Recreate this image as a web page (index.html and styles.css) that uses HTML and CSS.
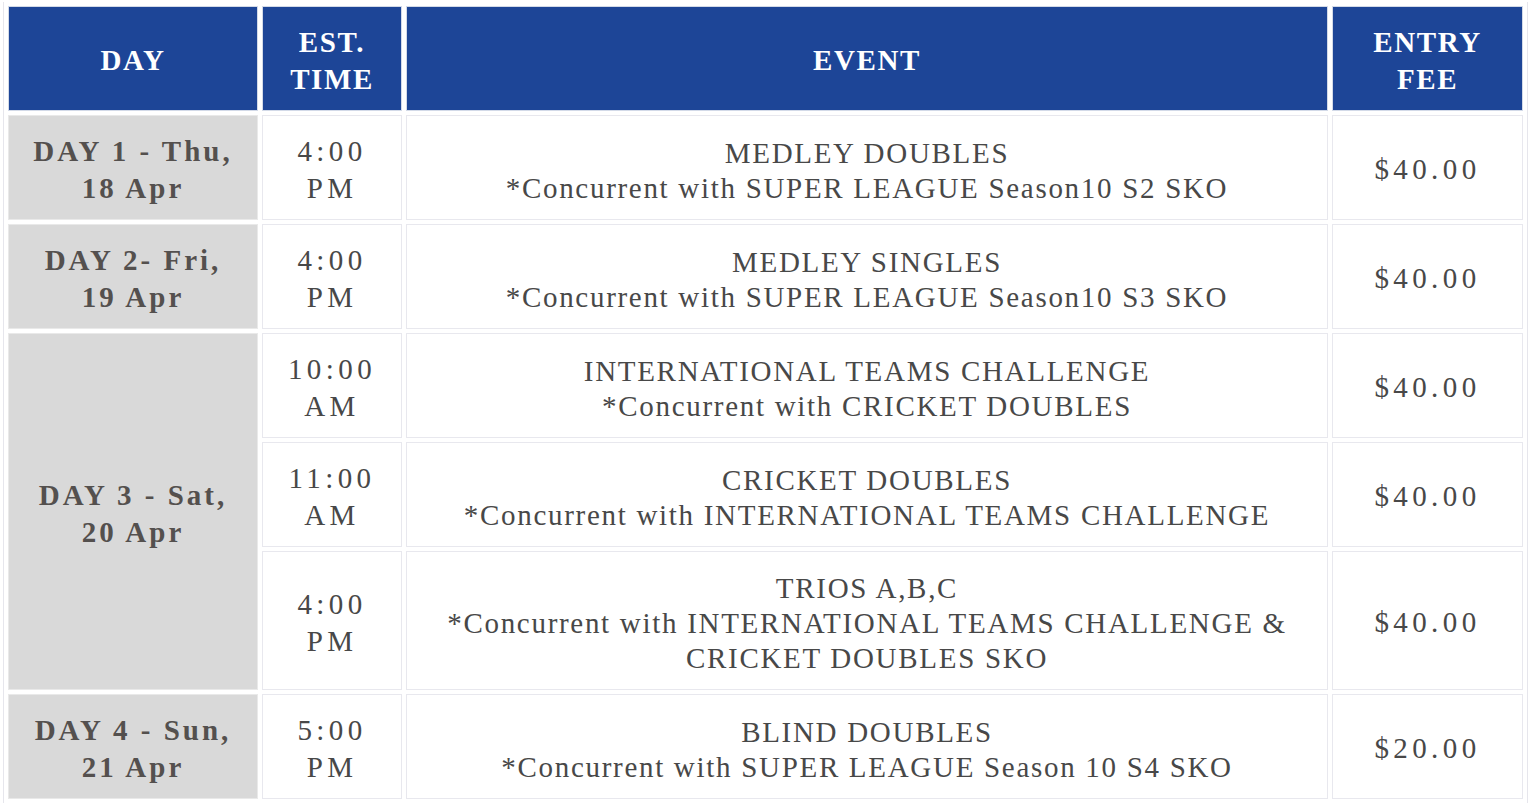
FILE: index.html
```html
<!DOCTYPE html>
<html lang="en">
<head>
<meta charset="utf-8">
<title>Schedule</title>
<link rel="stylesheet" href="styles.css">
</head>
<body>
<table class="schedule">
  <colgroup>
    <col class="c-day">
    <col class="c-time">
    <col class="c-event">
    <col class="c-fee">
  </colgroup>
  <thead>
    <tr>
      <th class="h-day">DAY</th>
      <th class="h-time">EST.<br>TIME</th>
      <th class="h-event">EVENT</th>
      <th class="h-fee">ENTRY<br>FEE</th>
    </tr>
  </thead>
  <tbody>
    <tr>
      <td class="day">DAY 1 - Thu,<br>18 Apr</td>
      <td class="time">4:00<br>PM</td>
      <td class="event">MEDLEY DOUBLES<br>*Concurrent with SUPER LEAGUE Season10 S2 SKO</td>
      <td class="fee">$40.00</td>
    </tr>
    <tr>
      <td class="day">DAY 2- Fri,<br>19 Apr</td>
      <td class="time">4:00<br>PM</td>
      <td class="event">MEDLEY SINGLES<br>*Concurrent with SUPER LEAGUE Season10 S3 SKO</td>
      <td class="fee">$40.00</td>
    </tr>
    <tr>
      <td class="day" rowspan="3">DAY 3 - Sat,<br>20 Apr</td>
      <td class="time">10:00<br>AM</td>
      <td class="event">INTERNATIONAL TEAMS CHALLENGE<br>*Concurrent with CRICKET DOUBLES</td>
      <td class="fee">$40.00</td>
    </tr>
    <tr>
      <td class="time">11:00<br>AM</td>
      <td class="event">CRICKET DOUBLES<br>*Concurrent with INTERNATIONAL TEAMS CHALLENGE</td>
      <td class="fee">$40.00</td>
    </tr>
    <tr>
      <td class="time">4:00<br>PM</td>
      <td class="event">TRIOS A,B,C<br>*Concurrent with INTERNATIONAL TEAMS CHALLENGE &amp;<br>CRICKET DOUBLES SKO</td>
      <td class="fee">$40.00</td>
    </tr>
    <tr>
      <td class="day">DAY 4 - Sun,<br>21 Apr</td>
      <td class="time">5:00<br>PM</td>
      <td class="event">BLIND DOUBLES<br>*Concurrent with SUPER LEAGUE Season 10 S4 SKO</td>
      <td class="fee">$20.00</td>
    </tr>
  </tbody>
</table>
</body>
</html>
```

FILE: styles.css
```css
html, body {
  margin: 0;
  padding: 0;
  background: #ffffff;
}

body {
  padding: 2px 0 0 3px;
  font-family: "Liberation Serif", "Times New Roman", serif;
  font-size: 29px;
  color: #484848;
}

.schedule {
  width: 1525px;
  table-layout: fixed;
  border-collapse: separate;
  border-spacing: 4px;
  border-left: 1px solid #e6e6ec;
  border-right: 1px solid #e6e6ec;
}

.c-day { width: 250px; }
.c-time { width: 140px; }
.c-event { width: 922px; }
.c-fee { width: 191px; }

.schedule th,
.schedule td {
  box-sizing: border-box;
  border: 1px solid #e8e8ee;
  padding: 17px 4px 13px;
  text-align: center;
  vertical-align: middle;
  line-height: 36.5px;
}

.schedule th {
  background: #1d4597;
  border-color: #d3dae8;
  color: #ffffff;
  font-weight: bold;
  letter-spacing: 1.6px;
}

.schedule .day {
  background: #d9d9d9;
  border-color: #e9e9e9;
  color: #54504e;
  font-weight: bold;
  letter-spacing: 3px;
}

.schedule .time {
  background: #ffffff;
  letter-spacing: 4.4px;
}

.schedule .event {
  background: #ffffff;
  letter-spacing: 1.7px;
  line-height: 35px;
  padding-top: 19px;
  padding-bottom: 13px;
}

.schedule .fee {
  background: #ffffff;
  letter-spacing: 4.4px;
}
```
